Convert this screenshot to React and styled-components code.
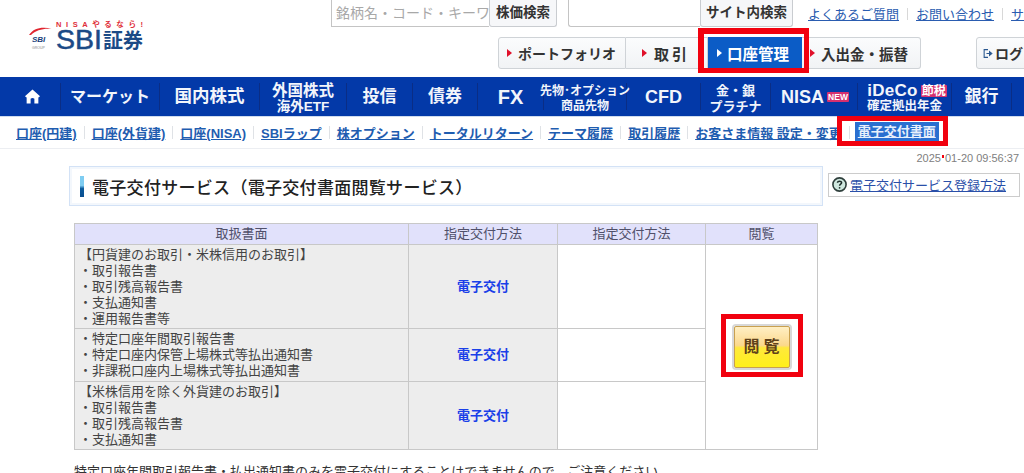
import React from 'react';
import styled, { createGlobalStyle } from 'styled-components';

const GlobalStyle = createGlobalStyle`
  html, body {
    margin: 0;
    padding: 0;
    background: #fff;
    overflow: hidden;
  }
  body {
    font-family: "Liberation Sans", "Noto Sans CJK JP", sans-serif;
  }
`;

const Page = styled.div`
  width: 1024px;
  height: 473px;
  overflow: hidden;
`;

const Header = styled.header`
  display: flex;
  height: 77px;
  box-sizing: border-box;
  padding-left: 29px;
`;

const LogoBox = styled.div`
  width: 302px;
  flex: none;
  padding-top: 19px;
  box-sizing: border-box;
`;

const HeaderRight = styled.div`
  display: flex;
  flex-direction: column;
  gap: 11px;
  width: 693px;
  flex: none;
`;

const SearchRow = styled.div`
  display: flex;
  height: 26px;
  white-space: nowrap;
`;

const SearchInput = styled.div`
  width: 158px;
  flex: none;
  box-sizing: border-box;
  height: 27px;
  border: 1px solid #c4c4c4;
  border-top: 0;
  border-right: 0;
  padding-left: 4px;
  font-size: 14px;
  line-height: 27px;
  color: #a8a8a8;
  overflow: hidden;
`;

const BlankInput = styled(SearchInput)`
  width: 132px;
  margin-left: 11px;
  border-radius: 0 0 0 3px;
`;

const SearchButton = styled.div`
  width: ${(p) => p.$w}px;
  flex: none;
  box-sizing: border-box;
  height: 27px;
  background: #f6f7f9;
  border: 1px solid #c9ccd0;
  border-top: 0;
  border-radius: 0 0 3px 3px;
  font-size: 13.5px;
  font-weight: 700;
  line-height: 26px;
  text-align: center;
  color: #333;
`;

const TopLinks = styled.div`
  display: flex;
  align-items: center;
  gap: 4px;
  margin-left: 15px;
  height: 27px;
  font-size: 13px;
  a {
    color: #2a5cb0;
    text-decoration: underline;
  }
  i {
    width: 1px;
    height: 12px;
    margin: 0 4px;
    background: #d8d8d8;
  }
`;

const MenuRow = styled.div`
  display: flex;
  margin-left: 167px;
  height: 32px;
`;

const MenuGroup = styled.div`
  display: flex;
  height: 32px;
`;

const MenuButton = styled.div`
  display: flex;
  align-items: center;
  width: ${(p) => p.$w}px;
  box-sizing: border-box;
  padding-left: ${(p) => p.$pad || 8}px;
  gap: ${(p) => p.$gap || 6}px;
  background: linear-gradient(#fbfcfd, #f1f3f5);
  border: 1px solid #cfd3d7;
  border-left-width: ${(p) => (p.$joined ? 0 : 1)}px;
  border-radius: ${(p) => p.$radius || '0'};
  font-size: ${(p) => p.$size || 14}px;
  font-weight: 700;
  letter-spacing: ${(p) => p.$spacing || 0}px;
  color: #333;
  white-space: nowrap;
  &::before {
    content: '';
    flex: none;
    border-left: 5px solid #e0102a;
    border-top: 4px solid transparent;
    border-bottom: 4px solid transparent;
  }
`;

const ActiveMenu = styled.div`
  display: flex;
  align-items: center;
  width: 94px;
  height: 32px;
  box-sizing: border-box;
  padding-left: 9px;
  gap: 5px;
  background: #0b5cc6;
  font-size: 15.5px;
  font-weight: 700;
  color: #fff;
  white-space: nowrap;
  position: relative;
  z-index: 1;
  &::before {
    content: '';
    flex: none;
    border-left: 5px solid #fff;
    border-top: 4px solid transparent;
    border-bottom: 4px solid transparent;
  }
  &::after {
    content: '';
    position: absolute;
    left: -10px;
    right: -7px;
    top: -9px;
    bottom: -4px;
    border: 5px solid #f1010f;
    border-width: 6px 5px 5px 6px;
  }
`;

const LoginButton = styled.div`
  display: flex;
  align-items: center;
  gap: 2px;
  width: 90px;
  flex: none;
  height: 32px;
  box-sizing: border-box;
  margin-left: 55px;
  padding-left: 6px;
  background: linear-gradient(#fbfcfd, #f1f3f5);
  border: 1px solid #cfd3d7;
  border-radius: 3px 0 0 3px;
  font-size: 14px;
  font-weight: 700;
  color: #333;
  white-space: nowrap;
`;

const Nav = styled.nav`
  display: flex;
  height: 39px;
  background: #0339a8;
  border-bottom: 1px solid #cfdcee;
`;

const NavItem = styled.div`
  width: ${(p) => p.$w}px;
  flex: none;
  display: flex;
  flex-direction: column;
  align-items: center;
  justify-content: center;
  box-sizing: border-box;
  margin: 6px 0;
  padding-left: ${(p) => p.$pad || 0}px;
  padding-top: ${(p) => p.$top || 0}px;
  border-right: 1px solid #0a2d85;
  color: #f2f5fb;
  font-weight: 700;
  font-size: ${(p) => p.$size || 17}px;
  white-space: nowrap;
  line-height: 1;
`;

const NavLine = styled.span`
  display: flex;
  align-items: center;
  font-size: ${(p) => p.$size}px;
  line-height: ${(p) => p.$lh || 14}px;
  letter-spacing: ${(p) => p.$spacing || 0}px;
  gap: ${(p) => p.$gap || 2}px;
  margin-left: ${(p) => p.$nudge || 0}px;
`;

const Badge = styled.span`
  display: inline-block;
  background: #d5306f;
  color: #fff;
  font-size: ${(p) => p.$size}px;
  font-weight: 700;
  letter-spacing: 0;
  line-height: ${(p) => p.$lh}px;
  padding: 0 1px;
  border-radius: 1px;
`;

const SubNav = styled.div`
  display: flex;
  align-items: center;
  height: 32px;
  box-sizing: border-box;
  padding-left: 16px;
  border-bottom: 1px solid #eceef2;
  white-space: nowrap;
`;

const SubLink = styled.a`
  font-size: 13px;
  font-weight: 700;
  color: #1f5db0;
  text-decoration: underline;
`;

const SubSep = styled.i`
  width: 1px;
  height: 13px;
  margin: 0 7px;
  background: #dfe2e6;
`;

const ActiveSub = styled.a`
  position: relative;
  margin: 0 0 3px -2px;
  padding: 0 3px;
  background: #2a6fd0;
  font-size: 13px;
  font-weight: 700;
  line-height: 19px;
  color: #e8f0fb;
  text-decoration: underline;
  &::after {
    content: '';
    position: absolute;
    left: -18px;
    right: -9px;
    top: -6px;
    bottom: -5px;
    border: 5px solid #f1010f;
  }
`;

const Stamp = styled.div`
  height: 17px;
  padding-right: 5px;
  text-align: right;
  font-size: 11px;
  line-height: 18px;
  color: #808080;
`;

const StampDot = styled.span`
  display: inline-block;
  width: 2px;
  height: 3px;
  margin: 0 1px;
  vertical-align: 4px;
  background: #f1010f;
`;

const Columns = styled.div`
  display: flex;
  padding-left: 69px;
`;

const MainColumn = styled.main`
  width: 754px;
  flex: none;
`;

const TitleBox = styled.div`
  display: flex;
  align-items: center;
  gap: 8px;
  height: 40px;
  box-sizing: border-box;
  padding-left: 10px;
  background: #fff;
  border: 1px solid #d3e2f6;
  box-shadow: inset 0 0 0 2px #f3f7fc;
`;

const TitleBar = styled.span`
  width: 4px;
  height: 21px;
  background: linear-gradient(#7fcdf2 0 45%, #0a5a9c 60%, #0a4f90);
`;

const Title = styled.h1`
  margin: 0;
  font-size: 17px;
  font-weight: 500;
  letter-spacing: 0.3px;
  color: #222;
  white-space: nowrap;
`;

const HelpLink = styled.div`
  display: flex;
  align-items: center;
  gap: 3px;
  width: 192px;
  height: 24px;
  box-sizing: border-box;
  margin: 7px 0 0 5px;
  padding: 0 0 2px 3px;
  border: 1px solid #ccc;
  font-size: 13px;
  a {
    color: #2a4fa8;
    text-decoration: underline;
  }
`;

const DocTable = styled.table`
  width: 743px;
  margin: 17px 0 0 5px;
  border-collapse: collapse;
  table-layout: fixed;
  font-size: 13px;
  line-height: 16px;
  color: #444;
  th, td {
    border: 1px solid #c8c8c8;
    box-sizing: border-box;
  }
`;

const HeadCell = styled.th`
  height: 21px;
  padding: 0;
  background: #e1e1fb;
  font-weight: 400;
  color: #50506a;
`;

const DocCell = styled.td`
  height: ${(p) => p.$h}px;
  padding: 1px 4px;
  background: #ededed;
  white-space: pre-line;
`;

const MethodCell = styled.td`
  padding: 0;
  background: #ededed;
  text-align: center;
  font-size: 13px;
  font-weight: 700;
  color: #1a3fe8;
`;

const BlankCell = styled.td`
  padding: 0;
`;

const ViewCell = styled.td`
  padding: 0;
  vertical-align: middle;
`;

const ViewFrame = styled.div`
  display: flex;
  width: fit-content;
  margin: 0 auto 4px;
  padding: 7px 8px 4px;
  border: 5px solid #f1010f;
`;

const ViewButton = styled.div`
  width: 56px;
  height: 42px;
  box-sizing: border-box;
  border: 1px solid #c8a050;
  box-shadow: 0 0 0 2px #d8d8d8;
  border-radius: 2px;
  background: linear-gradient(#ffefc4, #fbd88c 46%, #ffe93c 52%, #fff01a);
  font-size: 16px;
  font-weight: 700;
  line-height: 40px;
  text-align: center;
  letter-spacing: 4px;
  text-indent: 4px;
  color: #5f421a;
`;

const Note = styled.p`
  margin: 14px 0 0 5px;
  font-size: 13px;
  line-height: 16px;
  color: #333;
  white-space: nowrap;
`;

const HomeIcon = () => (
  <svg width="17" height="17" viewBox="0 0 18 17">
    <path d="M9 1 L17 8.2 L15.2 9.6 L15.2 16 L11 16 L11 11 Q9 9.4 7 11 L7 16 L2.8 16 L2.8 9.6 L1 8.2 Z" fill="#fff" />
  </svg>
);

const LogoutIcon = () => (
  <svg width="13" height="13" viewBox="0 0 13 13" fill="none" stroke="#2a5890" strokeWidth="1.4">
    <path d="M6.5 1.5 H1.5 V11.5 H6.5" />
    <path d="M4.5 6.5 H9 M8.5 4 L11.5 6.5 L8.5 9 Z" fill="#2a5890" />
  </svg>
);

const HelpIcon = () => (
  <svg width="15" height="15" viewBox="0 0 15 15">
    <circle cx="7.5" cy="7.5" r="6.6" fill="#cfe8df" stroke="#2f3f3c" strokeWidth="1.6" />
    <path d="M5.4 5.8 C5.6 3.6 9.6 3.6 9.6 5.8 C9.6 7.2 7.6 7.2 7.6 8.8" fill="none" stroke="#1f2f2c" strokeWidth="1.5" />
    <circle cx="7.6" cy="10.8" r="0.9" fill="#1f2f2c" />
  </svg>
);

const logoFont = 'Liberation Sans, Noto Sans CJK JP, sans-serif';

const SbiLogo = () => (
  <svg width="116" height="34" viewBox="0 0 116 34">
    <text x="27" y="8" fontSize="7.5" fontWeight="700" fill="#e0303a" fontFamily={logoFont} textLength="87">NISAやるなら!</text>
    <path d="M0 16 C4 9 14 7 23 10 C15 9 7 11 2 16 Z" fill="#e0252f" />
    <text x="3" y="23" fontSize="8" fontWeight="700" fontStyle="italic" fill="#1a3f7a" fontFamily={logoFont}>SBI</text>
    <text x="3" y="29.5" fontSize="3.5" fill="#888" fontFamily={logoFont}>GROUP</text>
    <text x="27" y="30" fontSize="27" fill="#1b4a86" stroke="#1b4a86" strokeWidth="0.5" fontFamily={logoFont} textLength="46" lengthAdjust="spacingAndGlyphs">SBI</text>
    <text x="74" y="29" fontSize="20" fontWeight="700" fill="#1b4a86" fontFamily={logoFont}>証券</text>
  </svg>
);

const subLinks = [
  '口座(円建)',
  '口座(外貨建)',
  '口座(NISA)',
  'SBIラップ',
  '株オプション',
  'トータルリターン',
  'テーマ履歴',
  '取引履歴',
  'お客さま情報 設定・変更',
];

const docRows = [
  { h: 84, text: '【円貨建のお取引・米株信用のお取引】\n・取引報告書\n・取引残高報告書\n・支払通知書\n・運用報告書等' },
  { h: 53, text: '・特定口座年間取引報告書\n・特定口座内保管上場株式等払出通知書\n・非課税口座内上場株式等払出通知書' },
  { h: 68, text: '【米株信用を除く外貨建のお取引】\n・取引報告書\n・取引残高報告書\n・支払通知書' },
];

const App = () => {
  return (
    <Page>
      <GlobalStyle />
      <Header>
        <LogoBox>
          <SbiLogo />
        </LogoBox>
        <HeaderRight>
          <SearchRow>
            <SearchInput>銘柄名・コード・キーワード</SearchInput>
            <SearchButton $w={68}>株価検索</SearchButton>
            <BlankInput />
            <SearchButton $w={93}>サイト内検索</SearchButton>
            <TopLinks>
              <a>よくあるご質問</a>
              <i />
              <a>お問い合わせ</a>
              <i />
              <a>サイトマップ</a>
            </TopLinks>
          </SearchRow>
          <MenuRow>
            <MenuGroup>
              <MenuButton $w={128} $radius="3px 0 0 3px">ポートフォリオ</MenuButton>
              <MenuButton $w={82} $joined $pad={16} $gap={7} $size={15} $spacing={3}>取引</MenuButton>
              <ActiveMenu>口座管理</ActiveMenu>
              <MenuButton $w={119} $joined $size={14.5} $radius="0 3px 3px 0">入出金・振替</MenuButton>
            </MenuGroup>
            <LoginButton>
              <LogoutIcon />
              ログアウト
            </LoginButton>
          </MenuRow>
        </HeaderRight>
      </Header>
      <Nav>
        <NavItem $w={61} $pad={5}><HomeIcon /></NavItem>
        <NavItem $w={99} $size={16}>マーケット</NavItem>
        <NavItem $w={100} $size={17.5}>国内株式</NavItem>
        <NavItem $w={87} $top={3}>
          <NavLine $size={15.5} $lh={17}>外国株式</NavLine>
          <NavLine $size={13.5} $lh={15}>海外ETF</NavLine>
        </NavItem>
        <NavItem $w={66}>投信</NavItem>
        <NavItem $w={65}>債券</NavItem>
        <NavItem $w={66} $size={20}>FX</NavItem>
        <NavItem $w={83} $top={3}>
          <NavLine $size={12} $lh={16}>先物･オプション</NavLine>
          <NavLine $size={12} $lh={15}>商品先物</NavLine>
        </NavItem>
        <NavItem $w={74} $size={18}>CFD</NavItem>
        <NavItem $w={70} $top={3}>
          <NavLine $size={13} $lh={17}>金・銀</NavLine>
          <NavLine $size={13} $lh={15}>プラチナ</NavLine>
        </NavItem>
        <NavItem $w={87} $pad={2}>
          <NavLine $size={18} $gap={3}>NISA<Badge $size={8.5} $lh={10}>NEW</Badge></NavLine>
        </NavItem>
        <NavItem $w={94} $top={2}>
          <NavLine $size={17} $lh={17} $spacing={0.3} $gap={3} $nudge={5}>iDeCo<Badge $size={12} $lh={12}>節税</Badge></NavLine>
          <NavLine $size={12.5} $lh={14}>確定拠出年金</NavLine>
        </NavItem>
        <NavItem $w={60}>銀行</NavItem>
      </Nav>
      <SubNav>
        {subLinks.map((label, i) => (
          <React.Fragment key={label}>
            {i > 0 && <SubSep />}
            <SubLink>{label}</SubLink>
          </React.Fragment>
        ))}
        <SubSep />
        <ActiveSub>電子交付書面</ActiveSub>
      </SubNav>
      <Stamp>2025<StampDot />01-20 09:56:37</Stamp>
      <Columns>
        <MainColumn>
          <TitleBox>
            <TitleBar />
            <Title>電子交付サービス（電子交付書面閲覧サービス）</Title>
          </TitleBox>
          <DocTable>
            <colgroup>
              <col style={{ width: 334 }} />
              <col style={{ width: 149 }} />
              <col style={{ width: 148 }} />
              <col style={{ width: 112 }} />
            </colgroup>
            <thead>
              <tr>
                <HeadCell>取扱書面</HeadCell>
                <HeadCell>指定交付方法</HeadCell>
                <HeadCell>指定交付方法</HeadCell>
                <HeadCell>閲覧</HeadCell>
              </tr>
            </thead>
            <tbody>
              {docRows.map((row, i) => (
                <tr key={i}>
                  <DocCell $h={row.h}>{row.text}</DocCell>
                  <MethodCell>電子交付</MethodCell>
                  <BlankCell />
                  {i === 0 && (
                    <ViewCell rowSpan={3}>
                      <ViewFrame>
                        <ViewButton>閲覧</ViewButton>
                      </ViewFrame>
                    </ViewCell>
                  )}
                </tr>
              ))}
            </tbody>
          </DocTable>
          <Note>特定口座年間取引報告書・払出通知書のみを電子交付にすることはできませんので、ご注意ください。</Note>
        </MainColumn>
        <HelpLink>
          <HelpIcon />
          <a>電子交付サービス登録方法</a>
        </HelpLink>
      </Columns>
    </Page>
  );
};

export default App;
